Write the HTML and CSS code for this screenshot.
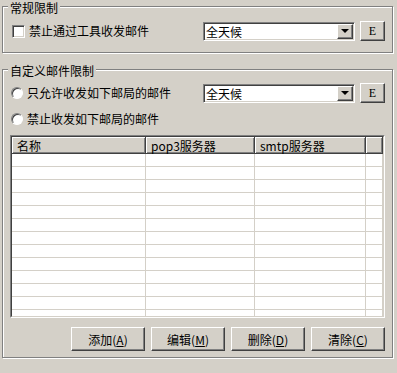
FILE: index.html
```html
<!DOCTYPE html>
<html lang="zh-CN">
<head>
    <meta charset="UTF-8">
    <title>邮件限制</title>
    <link rel="stylesheet" href="styles.css">
</head>
<body>
    <!-- 常规限制 -->
    <div class="group group-first">
        <div class="group-title">常规限制</div>
        <div class="row row-first">
            <label class="option"><span class="check"></span>禁止通过工具收发邮件</label>
            <div class="combo"><span class="combo-text">全天候</span><span class="drop"><span class="arrow"></span></span></div>
            <span class="btn btn-e">E</span>
        </div>
    </div>

    <!-- 自定义邮件限制 -->
    <div class="group group-second">
        <div class="group-title">自定义邮件限制</div>
        <div class="row row-first">
            <label class="option"><span class="radio"></span>只允许收发如下邮局的邮件</label>
            <div class="combo"><span class="combo-text">全天候</span><span class="drop"><span class="arrow"></span></span></div>
            <span class="btn btn-e">E</span>
        </div>
        <div class="row row-second">
            <label class="option"><span class="radio"></span>禁止收发如下邮局的邮件</label>
        </div>

        <div class="list">
            <div class="list-inner">
                <table>
                    <colgroup>
                        <col class="col-name">
                        <col class="col-pop">
                        <col class="col-smtp">
                        <col>
                    </colgroup>
                    <thead>
                        <tr><th>名称</th><th>pop3服务器</th><th>smtp服务器</th><th></th></tr>
                    </thead>
                    <tbody>
                        <tr><td></td><td></td><td></td><td></td></tr>
                        <tr><td></td><td></td><td></td><td></td></tr>
                        <tr><td></td><td></td><td></td><td></td></tr>
                        <tr><td></td><td></td><td></td><td></td></tr>
                        <tr><td></td><td></td><td></td><td></td></tr>
                        <tr><td></td><td></td><td></td><td></td></tr>
                        <tr><td></td><td></td><td></td><td></td></tr>
                        <tr><td></td><td></td><td></td><td></td></tr>
                        <tr><td></td><td></td><td></td><td></td></tr>
                        <tr><td></td><td></td><td></td><td></td></tr>
                        <tr><td></td><td></td><td></td><td></td></tr>
                        <tr><td></td><td></td><td></td><td></td></tr>
                        <tr><td></td><td></td><td></td><td></td></tr>
                    </tbody>
                </table>
            </div>
        </div>

        <div class="buttons">
            <span class="btn btn-wide">添加(<u>A</u>)</span>
            <span class="btn btn-wide">编辑(<u>M</u>)</span>
            <span class="btn btn-wide">删除(<u>D</u>)</span>
            <span class="btn btn-wide">清除(<u>C</u>)</span>
        </div>
    </div>
</body>
</html>
```

FILE: styles.css
```css
body {
    margin: 0;
    width: 397px;
    height: 373px;
    overflow: hidden;
    background-color: #d4d0c8;
    font-family: "Noto Sans CJK SC", "Liberation Sans", sans-serif;
    font-size: 12px;
    color: #000;
}
.group {
    margin: 0 4px 0 2px;
    padding: 0 7px;
    border: 1px solid #808080;
    box-shadow: inset 1px 1px #fff, 1px 1px #fff;
}
.group-first {
    margin-top: 6px;
    padding-bottom: 11px;
}
.group-second {
    margin-top: 16px;
    padding-bottom: 6px;
}
.group-title {
    width: fit-content;
    margin: -6px 0 0 -2px;
    padding: 0 2px;
    line-height: 13px;
    background-color: #d4d0c8;
}
.row {
    display: flex;
    align-items: center;
    height: 20px;
}
.group-first .row-first {
    margin-top: 7px;
}
.group-second .row-first {
    margin-top: 6px;
}
.row-second {
    margin-top: 8px;
    height: 16px;
}
.option {
    flex: 1;
    display: flex;
    align-items: center;
    line-height: 14px;
}
.check {
    width: 11px;
    height: 11px;
    margin: 0 4px 0 2px;
    background-color: #fff;
    border: 1px solid;
    border-color: #808080 #fff #fff #808080;
    box-shadow: inset 1px 1px #404040, inset -1px -1px #d4d0c8;
}
.radio {
    width: 10px;
    height: 10px;
    margin: 0 4px 0 1px;
    border-radius: 50%;
    background-color: #fff;
    border: 1px solid;
    border-color: #808080 #fff #fff #808080;
    box-shadow: inset 1px 1px #404040;
}
.combo {
    display: flex;
    align-items: center;
    width: 152px;
    height: 19px;
    box-sizing: border-box;
    margin-right: 5px;
    padding: 1px;
    background-color: #fff;
    border: 1px solid;
    border-color: #808080 #fff #fff #808080;
    box-shadow: inset 1px 1px #404040, inset -1px -1px #d4d0c8;
}
.combo-text {
    flex: 1;
    padding-left: 1px;
    line-height: 15px;
}
.drop {
    display: flex;
    align-items: center;
    justify-content: center;
    width: 16px;
    height: 15px;
    box-sizing: border-box;
    background-color: #d4d0c8;
    border: 1px solid;
    border-color: #fff #404040 #404040 #fff;
    box-shadow: inset -1px -1px #808080;
}
.arrow {
    width: 0;
    height: 0;
    border-left: 4px solid transparent;
    border-right: 4px solid transparent;
    border-top: 4px solid #000;
}
.btn {
    display: flex;
    align-items: center;
    justify-content: center;
    box-sizing: border-box;
    background-color: #d4d0c8;
    border: 1px solid;
    border-color: #fff #404040 #404040 #fff;
    box-shadow: inset -1px -1px #808080;
}
.btn-e {
    width: 25px;
    height: 20px;
    font-family: "Liberation Serif", serif;
    font-size: 12px;
}
.btn-wide {
    width: 74px;
    height: 24px;
    padding-top: 1px;
}
.list {
    margin-top: 8px;
    height: 183px;
    box-sizing: border-box;
    border: 1px solid;
    border-color: #808080 #fff #fff #808080;
}
.list-inner {
    height: 100%;
    box-sizing: border-box;
    overflow: hidden;
    background-color: #fff;
    border: 1px solid;
    border-color: #404040 #d4d0c8 #d4d0c8 #404040;
}
table {
    width: 100%;
    border-collapse: separate;
    border-spacing: 0;
    table-layout: fixed;
}
.col-name {
    width: 134px;
}
.col-pop {
    width: 109px;
}
.col-smtp {
    width: 111px;
}
th {
    height: 17px;
    padding: 1px 0 0 5px;
    box-sizing: border-box;
    text-align: left;
    font-weight: normal;
    line-height: 14px;
    background-color: #d4d0c8;
    border-right: 1px solid #404040;
    border-bottom: 1px solid #404040;
    box-shadow: inset 1px 1px #fff, inset -1px -1px #808080;
}
td {
    height: 12px;
    padding: 0;
    border-right: 1px solid #d4d0c8;
    border-bottom: 1px solid #d4d0c8;
}
.buttons {
    display: flex;
    justify-content: flex-end;
    gap: 6px;
    margin-top: 9px;
}
```
